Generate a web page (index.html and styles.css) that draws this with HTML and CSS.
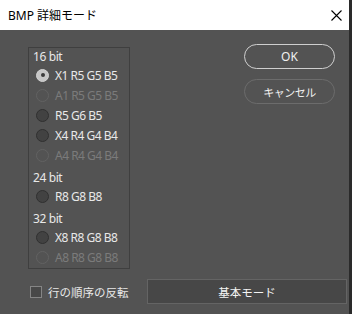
FILE: index.html
```html
<!DOCTYPE html>
<html lang="ja">
<head>
<meta charset="utf-8">
<title>BMP 詳細モード</title>
<link rel="stylesheet" href="styles.css">
</head>
<body>
<div class="window">
  <div class="titlebar">
    <span class="title">BMP 詳細モード</span>
    <svg class="close" width="11" height="11" viewBox="0 0 11 11"><path d="M0.5 0.5 L10.5 10.5 M10.5 0.5 L0.5 10.5" stroke="#000" stroke-width="1.1" fill="none"/></svg>
  </div>
  <div class="content">
    <div class="group">
      <div class="section">
        <div class="label">16 bit</div>
        <div class="row"><span class="radio checked"></span><span>X1 R5 G5 B5</span></div>
        <div class="row disabled"><span class="radio"></span><span>A1 R5 G5 B5</span></div>
        <div class="row"><span class="radio"></span><span>R5 G6 B5</span></div>
        <div class="row"><span class="radio"></span><span>X4 R4 G4 B4</span></div>
        <div class="row disabled"><span class="radio"></span><span>A4 R4 G4 B4</span></div>
      </div>
      <div class="section">
        <div class="label">24 bit</div>
        <div class="row"><span class="radio"></span><span>R8 G8 B8</span></div>
      </div>
      <div class="section">
        <div class="label">32 bit</div>
        <div class="row"><span class="radio"></span><span>X8 R8 G8 B8</span></div>
        <div class="row disabled"><span class="radio"></span><span>A8 R8 G8 B8</span></div>
      </div>
    </div>
    <div class="buttons">
      <div class="btn ok">OK</div>
      <div class="btn cancel">キャンセル</div>
    </div>
  </div>
  <div class="footer">
    <div class="check"><span class="box"></span><span class="check-label">行の順序の反転</span></div>
    <div class="basic">基本モード</div>
  </div>
</div>
</body>
</html>
```
FILE: styles.css
```css
html, body {
  margin: 0;
  padding: 0;
}
body {
  width: 352px;
  height: 314px;
  overflow: hidden;
  background: #535353;
  font-family: "Noto Sans", "Noto Sans CJK JP", sans-serif;
  color: #e8e8e8;
}
.window {
  width: 349px;
  height: 314px;
  border-right: 3px solid #2a2a2a;
  background: #535353;
}
.titlebar {
  height: 30px;
  background: #ffffff;
  display: flex;
  align-items: center;
  justify-content: space-between;
  padding: 0 7px 0 8px;
  box-sizing: border-box;
}
.title {
  color: #000;
  font-family: "Noto Sans", "Noto Sans CJK JP", sans-serif;
  font-size: 12px;
}
.close {
  display: block;
}
.content {
  display: flex;
  padding: 17px 0 0 28px;
}
.group {
  width: 102px;
  height: 222px;
  box-sizing: border-box;
  border: 1px solid #3f3f3f;
  padding: 1px 0 1px 0;
}
.section + .section {
  margin-top: 5px;
}
.label {
  height: 16px;
  line-height: 16px;
  padding-left: 4px;
  font-size: 12px;
  letter-spacing: -0.4px;
}
.row {
  height: 20px;
  display: flex;
  align-items: center;
  padding-left: 7px;
  font-size: 12px;
  letter-spacing: -0.5px;
}
.radio {
  width: 13px;
  height: 13px;
  box-sizing: border-box;
  border-radius: 50%;
  border: 1px solid #303030;
  background: #424242;
  margin-right: 6px;
  flex: none;
  position: relative;
}
.radio.checked {
  background: #c6c6c6;
  border-color: #d2d2d2;
}
.radio.checked::after {
  content: "";
  position: absolute;
  left: 3.5px;
  top: 3.5px;
  width: 4px;
  height: 4px;
  border-radius: 50%;
  background: #3a3a3a;
}
.row.disabled {
  color: #7b7b7b;
}
.row.disabled .radio {
  background: transparent;
  border-color: #626262;
}
.buttons {
  margin-left: 114px;
  display: flex;
  flex-direction: column;
  gap: 10px;
  margin-top: -3px;
}
.btn {
  width: 91px;
  height: 25px;
  box-sizing: border-box;
  border-radius: 13px;
  display: flex;
  align-items: center;
  justify-content: center;
  font-size: 12px;
  color: #f0f0f0;
}
.ok {
  border: 1.5px solid #cfcfcf;
}
.cancel {
  border: 1.5px solid #6c6c6c;
  font-size: 11px;
  letter-spacing: -0.5px;
}
.footer {
  display: flex;
  align-items: center;
  margin-top: 10px;
  padding-left: 30px;
}
.check {
  display: flex;
  align-items: center;
  margin-top: 1px;
}
.box {
  width: 12px;
  height: 12px;
  box-sizing: border-box;
  border: 1px solid #858585;
  background: #484848;
  margin-right: 6px;
}
.check-label {
  font-family: "Noto Sans CJK JP", sans-serif;
  font-size: 11.5px;
}
.basic {
  margin-left: auto;
  margin-right: 2px;
  width: 200px;
  height: 25px;
  box-sizing: border-box;
  border: 1px solid #646464;
  background: #474747;
  display: flex;
  align-items: center;
  justify-content: center;
  font-family: "Noto Sans CJK JP", sans-serif;
  font-size: 11.5px;
  color: #f4f4f4;
}
```
